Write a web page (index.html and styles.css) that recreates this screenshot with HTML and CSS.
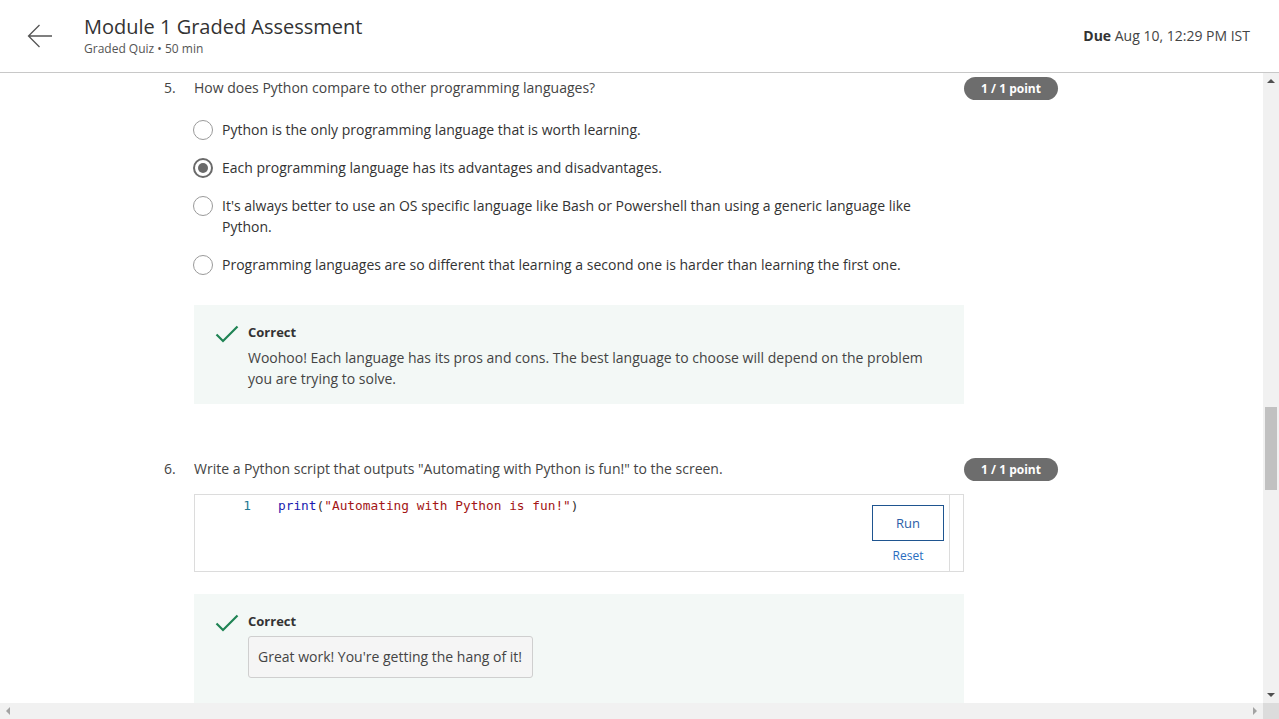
FILE: index.html
```html
<!DOCTYPE html>
<html>
<head>
<meta charset="utf-8">
<link rel="stylesheet" href="styles.css">
</head>
<body>
<div class="page">
  <header class="header">
    <div class="back">
      <svg width="26" height="24" viewBox="0 0 26 24"><path d="M25 12H1.5M12.5 1L1.5 12l11 11" fill="none" stroke="#555" stroke-width="1.3"/></svg>
    </div>
    <div class="titles">
      <div class="title">Module 1 Graded Assessment</div>
      <div class="subtitle">Graded Quiz • 50 min</div>
    </div>
    <div class="due"><b>Due</b> Aug 10, 12:29 PM IST</div>
  </header>
  <div class="viewport">
    <div class="content">
      <div class="question q5">
        <div class="num">5.</div>
        <div class="body">
          <div class="qtext">How does Python compare to other programming languages?</div>
          <ul class="options">
            <li class="option"><span class="radio"></span><span class="otext">Python is the only programming language that is worth learning.</span></li>
            <li class="option"><span class="radio checked"></span><span class="otext">Each programming language has its advantages and disadvantages.</span></li>
            <li class="option"><span class="radio"></span><span class="otext">It's always better to use an OS specific language like Bash or Powershell than using a generic language like Python.</span></li>
            <li class="option"><span class="radio"></span><span class="otext">Programming languages are so different that learning a second one is harder than learning the first one.</span></li>
          </ul>
          <div class="feedback">
            <svg class="check" width="24" height="18" viewBox="0 0 24 18"><path d="M1.5 9.5l6.5 6.5L22.5 1.5" fill="none" stroke="#1f8354" stroke-width="2.2"/></svg>
            <div class="fbody">
              <div class="fhead">Correct</div>
              <div class="ftext">Woohoo! Each language has its pros and cons. The best language to choose will depend on the problem you are trying to solve.</div>
            </div>
          </div>
        </div>
        <div class="badge">1 / 1 point</div>
      </div>

      <div class="question q6">
        <div class="num">6.</div>
        <div class="body">
          <div class="qtext">Write a Python script that outputs "Automating with Python is fun!" to the screen.</div>
          <div class="editor">
            <div class="code">
              <span class="ln">1</span><span class="src"><span class="kw">print</span>(<span class="str">"Automating with Python is fun!"</span>)</span>
            </div>
            <div class="actions">
              <button class="run">Run</button>
              <span class="reset">Reset</span>
            </div>
            <div class="estrip"></div>
          </div>
          <div class="feedback fb2">
            <svg class="check" width="24" height="18" viewBox="0 0 24 18"><path d="M1.5 9.5l6.5 6.5L22.5 1.5" fill="none" stroke="#1f8354" stroke-width="2.2"/></svg>
            <div class="fbody">
              <div class="fhead">Correct</div>
              <div class="output">Great work! You're getting the hang of it!</div>
            </div>
          </div>
        </div>
        <div class="badge">1 / 1 point</div>
      </div>
    </div>
    <div class="vscroll">
      <span class="arrow up"></span>
      <div class="vtrack"><div class="thumb"></div></div>
      <span class="arrow down"></span>
    </div>
  </div>
  <div class="hscroll">
    <div class="htrack">
      <span class="harrow left"></span>
      <span class="harrow right"></span>
    </div>
    <div class="corner"></div>
  </div>
</div>
</body>
</html>
```

FILE: styles.css
```css
* { box-sizing: border-box; }
html, body { margin: 0; padding: 0; }
body {
  font-family: "Open Sans", "Noto Sans", sans-serif;
  color: #333;
  background: #fff;
  overflow: hidden;
}
.page {
  width: 1279px;
  height: 719px;
  display: flex;
  flex-direction: column;
}
.header {
  height: 73px;
  flex: none;
  border-bottom: 1px solid #c8c8c8;
  display: flex;
  align-items: flex-start;
}
.back {
  width: 84px;
  padding: 24px 0 0 27px;
}
.back svg { display: block; }
.titles { flex: 1; padding-top: 13px; }
.title {
  font-size: 20px;
  line-height: 27px;
  color: #333;
}
.subtitle {
  font-size: 12px;
  line-height: 16px;
  color: #555;
  margin-top: 1px;
}
.due {
  font-size: 14px;
  line-height: 20px;
  color: #444;
  padding: 26px 29px 0 0;
}
.due b { color: #333; font-weight: 700; }

.viewport {
  flex: 1;
  display: flex;
  min-height: 0;
}
.content {
  flex: 1;
  overflow: hidden;
  padding: 4px 0 0 164px;
}
.question {
  display: grid;
  grid-template-columns: 30px 770px 94px;
  align-items: start;
}
.q6 { margin-top: 54px; }
.num, .qtext {
  font-size: 14px;
  line-height: 22px;
  padding-bottom: 1px;
  color: #444;
}
.body { min-width: 0; }
.badge {
  height: 23px;
  border-radius: 12px;
  background: #6d6d6d;
  color: #fff;
  font-size: 12px;
  font-weight: 700;
  line-height: 23px;
  text-align: center;
}
.options {
  list-style: none;
  margin: 19px 0 0;
  padding: 0;
}
.option {
  display: flex;
  align-items: flex-start;
  margin-bottom: 17px;
}
.option:last-child { margin-bottom: 0; }
.radio {
  flex: none;
  width: 20px;
  height: 20px;
  border-radius: 50%;
  border: 1.5px solid #9a9a9a;
  margin: 0.5px 9px 0 -1px;
  position: relative;
}
.radio.checked { border: 2px solid #6a6a6a; }
.radio.checked::after {
  content: "";
  position: absolute;
  left: 3px; top: 3px;
  width: 10px; height: 10px;
  border-radius: 50%;
  background: #6a6a6a;
}
.otext {
  font-size: 14px;
  line-height: 21px;
  color: #333;
  max-width: 700px;
}
.feedback {
  width: 770px;
  margin-top: 30px;
  background: #f3f8f6;
  display: flex;
  padding: 18px 20px 15px 21px;
}
.check { flex: none; margin: 2px 9px 0 0; display: block; }
.fhead {
  font-size: 13px;
  font-weight: 700;
  line-height: 18px;
  color: #333;
}
.ftext {
  margin-top: 6px;
  font-size: 14px;
  line-height: 21px;
  color: #444;
}
.editor {
  width: 770px;
  height: 78px;
  margin-top: 13px;
  border: 1px solid #dcdcdc;
  display: flex;
}
.code {
  flex: 1;
  padding-top: 2px;
  font-family: "DejaVu Sans Mono", "Liberation Mono", monospace;
  font-size: 12.8px;
  line-height: 18px;
  display: flex;
}
.ln {
  width: 83px;
  padding-right: 27px;
  text-align: right;
  color: #237893;
}
.src { color: #333; }
.kw { color: #1a1ab0; }
.str { color: #a31515; }
.actions {
  width: 77px;
  display: flex;
  flex-direction: column;
  align-items: flex-start;
  padding-top: 10px;
}
.run {
  width: 72px;
  height: 36px;
  background: #fff;
  border: 1px solid #1f5590;
  color: #2a5ea8;
  font-family: "Open Sans", sans-serif;
  font-size: 13px;
  padding: 0;
}
.reset {
  width: 72px;
  text-align: center;
  margin-top: 7px;
  font-size: 12px;
  line-height: 16px;
  color: #2a6dbf;
}
.estrip {
  width: 14px;
  border-left: 1px solid #dcdcdc;
}
.fb2 { margin-top: 22px; padding-bottom: 30px; }
.output {
  margin-top: 6px;
  display: inline-block;
  background: #f5f5f5;
  border: 1px solid #cfcfcf;
  border-radius: 3px;
  padding: 10px 10px 10px 9px;
  font-size: 14px;
  line-height: 20px;
  color: #444;
}

.vscroll {
  width: 16px;
  flex: none;
  background: #f1f1f1;
  display: flex;
  flex-direction: column;
  align-items: center;
}
.vtrack { flex: 1; width: 100%; position: relative; }
.thumb {
  position: absolute;
  left: 2px; right: 2px;
  top: 318px;
  height: 83px;
  background: #c1c1c1;
}
.arrow {
  width: 0; height: 0;
  border-left: 4px solid transparent;
  border-right: 4px solid transparent;
  margin: 6px 0;
}
.arrow.up { border-bottom: 4px solid #505050; }
.arrow.down { border-top: 4px solid #505050; }
.hscroll {
  height: 16px;
  flex: none;
  display: flex;
}
.htrack {
  flex: 1;
  background: #f1f1f1;
  display: flex;
  justify-content: space-between;
  align-items: center;
  padding: 0 6px;
}
.harrow {
  width: 0; height: 0;
  border-top: 4px solid transparent;
  border-bottom: 4px solid transparent;
}
.harrow.left { border-right: 4px solid #a3a3a3; }
.harrow.right { border-left: 4px solid #a3a3a3; }
.corner { width: 16px; background: #dcdcdc; }
```
